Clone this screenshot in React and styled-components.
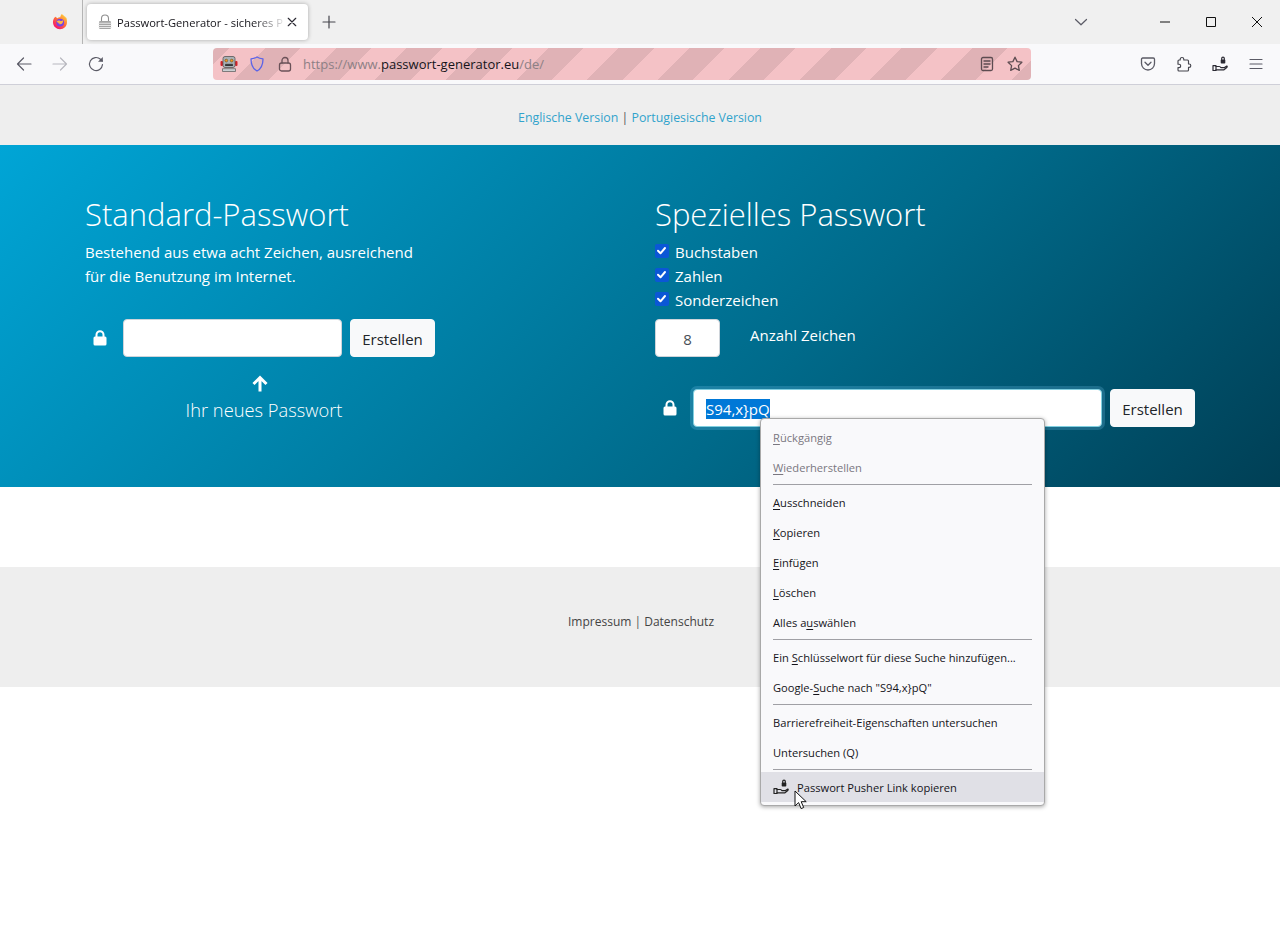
import styled, { createGlobalStyle } from "styled-components";

const uiFont = `"Open Sans", "Noto Sans", "Liberation Sans", sans-serif`;

const GlobalStyle = createGlobalStyle`
  html, body {
    margin: 0;
    padding: 0;
    background: #fff;
    overflow: hidden;
  }
  body {
    font-family: ${uiFont};
  }
  * {
    box-sizing: border-box;
  }
`;

function Icon({ size = 16, box = 16, children, color = "#5b5b66", fill = "none", width = 1.3 }) {
  return (
    <svg
      width={size}
      height={size}
      viewBox={`0 0 ${box} ${box}`}
      fill={fill}
      stroke={color}
      strokeWidth={width}
      strokeLinecap="round"
      strokeLinejoin="round"
    >
      {children}
    </svg>
  );
}

function FirefoxLogo() {
  return (
    <svg width="16" height="16" viewBox="0 0 16 16">
      <defs>
        <linearGradient id="fx" x1="0.8" y1="0.1" x2="0.2" y2="0.9">
          <stop offset="0" stopColor="#ffc63a" />
          <stop offset="0.45" stopColor="#ff7139" />
          <stop offset="1" stopColor="#f5156c" />
        </linearGradient>
      </defs>
      <path
        d="M14.6 4.6c-.4-.9-1.1-1.9-1.7-2.3.4.8.7 1.5.8 2C12.8 2 11.2 1.400 9.900.1 8.800 1.100 8.300 2.400 8.300 3.200 6.900 3.200 6 3.700 5.300 4.300 4.700 3.900 4.400 3.700 4 2.800 3.200 2.700 2.100 3.800 1.800 4.800 1.100 6 .9 7.500 1 8.800 1.300 12.500 4.300 15.200 8 15.200c3.900 0 7-3.100 7-7 0-1.200-.1-2.500-.4-3.600z"
        fill="url(#fx)"
      />
      <circle cx="8.200" cy="8.600" r="3.900" fill="#7542e5" />
      <path
        d="M4.700 7.200c1.300-.8 2.400-.7 3.300-.4.900.3 2.200.4 3-.5.500 1.800-.5 3.600-2.400 3.900-1.200.2-2-.1-2.500-.7.600.1 1.600.1 2.100-.4-1.100.1-2.800-.3-3.500-1.900z"
        fill="#ffb545"
      />
    </svg>
  );
}

function RobotEmoji() {
  return (
    <svg width="18" height="18" viewBox="0 0 18 18">
      <rect x="0.500" y="6" width="2.500" height="5" rx="1" fill="#d2232a" />
      <rect x="15" y="6" width="2.500" height="5" rx="1" fill="#d2232a" />
      <rect x="3" y="1.500" width="12" height="11" rx="2" fill="#aab1b5" stroke="#555" strokeWidth="0.800" />
      <circle cx="6.300" cy="5.600" r="1.400" fill="#f39a1e" stroke="#5a3a12" strokeWidth="0.500" />
      <circle cx="11.700" cy="5.600" r="1.400" fill="#f39a1e" stroke="#5a3a12" strokeWidth="0.500" />
      <path d="M5.500 11V9.300h7V11" fill="#333" stroke="#333" strokeWidth="0.800" />
      <path d="M2.500 16.500v-2.800h13v2.800z" fill="#c9cfd2" stroke="#666" strokeWidth="0.800" />
    </svg>
  );
}

function PusherIcon({ color = "#2b2a33" }) {
  return (
    <Icon color={color} width={1.2}>
      <rect x="8.700" y="3.600" width="4.600" height="4" rx="0.800" fill={color} stroke="none" />
      <path d="M9.700 3.600V2.500a1.300 1.300 0 0 1 2.600 0v1.100" />
      <path d="M1 9.700h3v4.800H1z" />
      <path d="M4 10.500h3.300c.9 0 1.300.4 1.500 1.100h3.700l2.300-1.600c.6.500.5 1.100 0 1.500l-2.800 2.300H4" />
    </Icon>
  );
}

function MouseCursor() {
  return (
    <svg width="14" height="20" viewBox="0 0 14 20">
      <path
        d="M1 1v15l3.600-3.400 2.500 6 2.600-1.100-2.500-5.800h5z"
        fill="#fff"
        stroke="#111"
        strokeWidth="1"
        strokeLinejoin="round"
      />
    </svg>
  );
}

function LockGlyph() {
  return (
    <svg width="16" height="16" viewBox="0 0 16 16">
      <path
        d="M4.500 7V4.800a3.500 3.500 0 0 1 7 0V7"
        fill="none"
        stroke="#fff"
        strokeWidth="2"
      />
      <rect x="1.500" y="6.500" width="13" height="9" rx="1.500" fill="#fff" />
    </svg>
  );
}

function CheckBox() {
  return (
    <Box>
      <svg width="13" height="13" viewBox="0 0 13 13">
        <path
          d="M3 6.800l2.500 2.500L10 4"
          fill="none"
          stroke="#fff"
          strokeWidth="2"
          strokeLinecap="round"
          strokeLinejoin="round"
        />
      </svg>
    </Box>
  );
}

export default function App() {
  return (
    <>
      <GlobalStyle />
      <Window>
        <TabBar>
          <TabStart>
            <FirefoxLogo />
          </TabStart>
          <Tab>
            <Icon color="#8f8f8f" width={1.1}>
              <path d="M4.500 7V4.500a3.500 3.500 0 0 1 7 0V7" />
              <rect x="2" y="7" width="12" height="8" rx="1.200" fill="#a5a5a5" stroke="none" />
              <path d="M2 9.300h12M2 11.500h12M2 13.500h12" stroke="#e6e6e6" />
            </Icon>
            <TabTitle>Passwort-Generator - sicheres P</TabTitle>
            <TabClose>
              <Icon size={10} box={12} color="#2b2a33" width={1.4}>
                <path d="M1.500 1.500l9 9M10.500 1.500l-9 9" />
              </Icon>
            </TabClose>
          </Tab>
          <NewTab>
            <Icon size={14} box={14} color="#45454d" width={1.2}>
              <path d="M7 1v12M1 7h12" />
            </Icon>
          </NewTab>
          <TabSpacer />
          <TabList>
            <Icon size={14} box={14} color="#5b5b66" width={1.2}>
              <path d="M1.500 4.500L7 9.800l5.500-5.300" />
            </Icon>
          </TabList>
          <WindowButton>
            <Icon size={12} box={12} color="#111" width={1}>
              <path d="M1 6h10" strokeLinecap="butt" />
            </Icon>
          </WindowButton>
          <WindowButton>
            <Icon size={12} box={12} color="#111" width={1}>
              <path d="M1.500 1.500h9v9h-9z" strokeLinecap="butt" strokeLinejoin="miter" />
            </Icon>
          </WindowButton>
          <WindowButton>
            <Icon size={12} box={12} color="#111" width={1}>
              <path d="M1 1l10 10M11 1L1 11" strokeLinecap="butt" />
            </Icon>
          </WindowButton>
        </TabBar>

        <NavBar>
          <NavButtons>
            <NavButton>
              <Icon width={1.2}>
                <path d="M15 8H1.500M7.500 2L1.500 8l6 6" />
              </Icon>
            </NavButton>
            <NavButton>
              <Icon color="#b8b8bf" width={1.2}>
                <path d="M1 8h13.500M8.500 2l6 6-6 6" />
              </Icon>
            </NavButton>
            <NavButton>
              <Icon width={1.2}>
                <path d="M14.500 8.500a6.500 6.500 0 1 1-2-5.200L14.300 5" />
                <path d="M14.800 1v4.800H10" fill="#5b5b66" stroke="none" />
              </Icon>
            </NavButton>
          </NavButtons>
          <UrlBar>
            <UrlIcon>
              <RobotEmoji />
            </UrlIcon>
            <UrlIcon>
              <Icon color="#5a63e8" width={1.3}>
                <path d="M8 1c2 1.300 3.800 1.700 6 1.900 0 5.500-1.800 9.800-6 12.100C3.800 12.700 2 8.400 2 2.900 4.200 2.700 6 2.300 8 1z" />
              </Icon>
            </UrlIcon>
            <UrlIcon>
              <Icon color="#6a5158">
                <path d="M5 7V4.500a3 3 0 0 1 6 0V7" />
                <rect x="2.500" y="7" width="11" height="8" rx="2" />
              </Icon>
            </UrlIcon>
            <UrlText>
              <UrlMuted>https://www.</UrlMuted>
              passwort-generator.eu
              <UrlMuted>/de/</UrlMuted>
            </UrlText>
            <UrlIcon>
              <Icon color="#5d4c51">
                <rect x="2.500" y="1.500" width="11" height="13" rx="1.500" />
                <path d="M5 5h6M5 8h6M5 11h4" />
              </Icon>
            </UrlIcon>
            <UrlIcon>
              <Icon color="#5d4c51">
                <path d="M8 1.200l2.100 4.400 4.800.6-3.500 3.400.9 4.800L8 12.100l-4.300 2.300.9-4.800L1.100 6.200l4.800-.6z" />
              </Icon>
            </UrlIcon>
          </UrlBar>
          <Toolbar>
            <NavButton>
              <Icon>
                <path d="M2.700 2h10.600c.7 0 1.200.5 1.200 1.200v4.300a6.500 6.500 0 0 1-13 0V3.200C1.500 2.500 2 2 2.700 2z" />
                <path d="M5 6.300l3 3 3-3" />
              </Icon>
            </NavButton>
            <NavButton>
              <Icon color="#45454d" width={1.15}>
                <path d="M6 1.500c1.200 0 1.800.8 1.800 1.800V4h3.700c.6 0 1 .4 1 1v3h.6a1.700 1.700 0 0 1 0 3.400h-.6v2.600c0 .6-.4 1-1 1H3c-.6 0-1-.4-1-1v-2.400h1a1.700 1.700 0 0 0 0-3.400H2V5c0-.6.400-1 1-1h1.200v-.7C4.200 2.300 4.800 1.500 6 1.500z" />
              </Icon>
            </NavButton>
            <NavButton>
              <PusherIcon />
            </NavButton>
            <NavButton>
              <Icon width={1.2}>
                <path d="M2 3.500h12M2 8h12M2 12.500h12" />
              </Icon>
            </NavButton>
          </Toolbar>
        </NavBar>

        <TopStrip>
          <SoftLink>Englische Version</SoftLink> | <SoftLink>Portugiesische Version</SoftLink>
        </TopStrip>

        <Hero>
          <Column>
            <Heading>Standard-Passwort</Heading>
            <Lead>
              Bestehend aus etwa acht Zeichen, ausreichend
              <br />
              für die Benutzung im Internet.
            </Lead>
            <FieldRow $top={31}>
              <FieldLock>
                <LockGlyph />
              </FieldLock>
              <Field $width={219} />
              <CreateButton>Erstellen</CreateButton>
            </FieldRow>
            <NewPasswordHint>
              <svg width="20" height="18" viewBox="0 0 20 18">
                <path
                  d="M10 16.500V3M3.500 9L10 2.500 16.500 9"
                  fill="none"
                  stroke="#fff"
                  strokeWidth="3"
                />
              </svg>
              <HintText>Ihr neues Passwort</HintText>
            </NewPasswordHint>
          </Column>
          <Column>
            <Heading>Spezielles Passwort</Heading>
            <CheckList>
              <CheckRow>
                <CheckBox /> Buchstaben
              </CheckRow>
              <CheckRow>
                <CheckBox /> Zahlen
              </CheckRow>
              <CheckRow>
                <CheckBox /> Sonderzeichen
              </CheckRow>
            </CheckList>
            <CountRow>
              <CountField>8</CountField>
              <CountLabel>Anzahl Zeichen</CountLabel>
            </CountRow>
            <FieldRow $top={32}>
              <FieldLock>
                <LockGlyph />
              </FieldLock>
              <Field $width={409} $focused>
                <Selected>S94,x}pQ</Selected>
              </Field>
              <CreateButton>Erstellen</CreateButton>
            </FieldRow>
          </Column>
        </Hero>

        <WhiteGap />

        <Footer>
          <FooterLink>Impressum</FooterLink> | <FooterLink>Datenschutz</FooterLink>
        </Footer>

        <Menu>
          <MenuItem $disabled>
            <span>
              <u>R</u>ückgängig
            </span>
          </MenuItem>
          <MenuItem $disabled>
            <span>
              <u>W</u>iederherstellen
            </span>
          </MenuItem>
          <MenuLine />
          <MenuItem>
            <span>
              <u>A</u>usschneiden
            </span>
          </MenuItem>
          <MenuItem>
            <span>
              <u>K</u>opieren
            </span>
          </MenuItem>
          <MenuItem>
            <span>
              <u>E</u>infügen
            </span>
          </MenuItem>
          <MenuItem>
            <span>
              <u>L</u>öschen
            </span>
          </MenuItem>
          <MenuItem>
            <span>
              Alles a<u>u</u>swählen
            </span>
          </MenuItem>
          <MenuLine />
          <MenuItem>
            <span>
              Ein <u>S</u>chlüsselwort für diese Suche hinzufügen...
            </span>
          </MenuItem>
          <MenuItem>
            <span>
              Google-<u>S</u>uche nach "S94,x{"}"}pQ"
            </span>
          </MenuItem>
          <MenuLine />
          <MenuItem>
            <span>Barrierefreiheit-Eigenschaften untersuchen</span>
          </MenuItem>
          <MenuItem>
            <span>Untersuchen (Q)</span>
          </MenuItem>
          <MenuLine />
          <MenuItem $active>
            <PusherIcon color="#222" />
            <span>Passwort Pusher Link kopieren</span>
          </MenuItem>
        </Menu>
        <CursorMark>
          <MouseCursor />
        </CursorMark>
      </Window>
    </>
  );
}

const Window = styled.div`
  position: relative;
  width: 1280px;
  height: 943px;
  overflow: hidden;
  background: #fff;
`;

const TabBar = styled.div`
  display: flex;
  align-items: center;
  height: 44px;
  background: #f0f0f0;
`;

const TabStart = styled.div`
  display: flex;
  align-items: center;
  justify-content: flex-end;
  width: 83px;
  height: 44px;
  padding-right: 14px;
  border-right: 1px solid #b5b5b5;
`;

const Tab = styled.div`
  display: flex;
  align-items: center;
  width: 221px;
  height: 36px;
  margin-left: 4px;
  padding: 0 11px 0 10px;
  border-radius: 4px;
  background: #fff;
  box-shadow: 0 0 4px rgba(0, 0, 0, 0.3);
`;

const TabTitle = styled.div`
  flex: 1;
  margin-left: 4px;
  padding-right: 4px;
  overflow: hidden;
  white-space: nowrap;
  font-size: 11.15px;
  color: #15141a;
  -webkit-mask-image: linear-gradient(to right, #000 80%, transparent 100%);
  mask-image: linear-gradient(to right, #000 80%, transparent 100%);
`;

const TabClose = styled.div`
  display: flex;
`;

const NewTab = styled.div`
  display: flex;
  margin-left: 14px;
`;

const TabSpacer = styled.div`
  flex: 1;
`;

const TabList = styled.div`
  display: flex;
  margin-right: 54px;
`;

const WindowButton = styled.div`
  display: flex;
  justify-content: center;
  width: 46px;
`;

const NavBar = styled.div`
  display: flex;
  align-items: center;
  height: 41px;
  background: #f9f9fb;
  border-bottom: 1px solid #cfcfd8;
`;

const NavButtons = styled.div`
  display: flex;
  width: 213px;
  padding-left: 6px;
`;

const NavButton = styled.div`
  display: flex;
  align-items: center;
  justify-content: center;
  width: 36px;
  height: 32px;
`;

const UrlBar = styled.div`
  display: flex;
  align-items: center;
  width: 818px;
  height: 32px;
  padding: 0 2px;
  border-radius: 4px;
  background: repeating-linear-gradient(
    135deg,
    #e0b2b6 0,
    #e0b2b6 12px,
    #f4c2c6 12px,
    #f4c2c6 37px,
    #e0b2b6 37px,
    #e0b2b6 50px
  );
`;

const UrlIcon = styled.div`
  display: flex;
  align-items: center;
  justify-content: center;
  width: 28px;
  height: 24px;
  flex-shrink: 0;
`;

const UrlText = styled.div`
  flex: 1;
  margin-left: 4px;
  font-size: 13px;
  color: #15141a;
  white-space: nowrap;
`;

const UrlMuted = styled.span`
  color: #8d8085;
`;

const Toolbar = styled.div`
  display: flex;
  margin-left: 99px;
`;

const TopStrip = styled.div`
  height: 60px;
  padding-top: 23px;
  background: #eee;
  text-align: center;
  font-size: 12.35px;
  line-height: 20px;
  color: #555;
`;

const SoftLink = styled.a`
  color: #31a3cc;
`;

const Hero = styled.div`
  display: grid;
  grid-template-columns: 570px 570px;
  height: 342px;
  padding: 46px 0 0 85px;
  background: linear-gradient(135deg, #00a5d6 0%, #006a8a 62%, #003f55 100%);
  color: #fff;
`;

const Column = styled.div`
  display: flex;
  flex-direction: column;
  align-items: flex-start;
`;

const Heading = styled.h2`
  margin: 0 0 3px;
  font-size: 31px;
  font-weight: 300;
  line-height: 46px;
  color: #fff;
`;

const Lead = styled.p`
  margin: 0;
  font-size: 15px;
  line-height: 24px;
`;

const FieldRow = styled.div`
  display: flex;
  align-items: center;
  margin-top: ${(props) => props.$top}px;
`;

const FieldLock = styled.div`
  display: flex;
  justify-content: center;
  width: 30px;
  margin-right: 8px;
`;

const Field = styled.div`
  width: ${(props) => props.$width}px;
  height: 38px;
  padding: 0 12px;
  border: 1px solid ${(props) => (props.$focused ? "#80cfe0" : "#ced4da")};
  border-radius: 4px;
  background: #fff;
  font-size: 15px;
  line-height: 38px;
  color: #495057;
  box-shadow: ${(props) => (props.$focused ? "0 0 0 3px rgba(110, 190, 230, 0.25)" : "none")};
`;

const Selected = styled.span`
  background: #0078d7;
  color: #fff;
`;

const CreateButton = styled.button`
  width: 85px;
  height: 38px;
  margin-left: 8px;
  padding: 1px 0 0;
  border: 1px solid #f8f9fa;
  border-radius: 4px;
  background: #f8f9fa;
  font-family: inherit;
  font-size: 15px;
  color: #212529;
`;

const NewPasswordHint = styled.div`
  display: flex;
  flex-direction: column;
  align-items: center;
  width: 350px;
  margin-top: 18px;
`;

const HintText = styled.div`
  margin-top: 3px;
  padding-left: 8px;
  font-size: 18.3px;
  font-weight: 300;
  line-height: 28px;
`;

const CheckList = styled.div`
  display: flex;
  flex-direction: column;
`;

const CheckRow = styled.label`
  display: flex;
  align-items: center;
  gap: 6px;
  height: 24px;
  font-size: 15px;
`;

const Box = styled.span`
  display: flex;
  width: 14px;
  height: 14px;
  margin-top: -3px;
  border-radius: 2px;
  background: #0b57d6;
`;

const CountRow = styled.div`
  display: flex;
  align-items: center;
  margin-top: 7px;
`;

const CountField = styled.div`
  width: 65px;
  height: 38px;
  border: 1px solid #ced4da;
  border-radius: 4px;
  background: #fff;
  text-align: center;
  font-size: 15px;
  line-height: 38px;
  color: #495057;
`;

const CountLabel = styled.div`
  margin: -6px 0 0 30px;
  font-size: 15px;
`;

const WhiteGap = styled.div`
  height: 80px;
`;

const Footer = styled.div`
  height: 120px;
  padding: 45px 0 0 568px;
  background: #eee;
  font-size: 12px;
  line-height: 20px;
  color: #555;
`;

const FooterLink = styled.a`
  color: #444;
`;

const Menu = styled.div`
  position: absolute;
  top: 418px;
  left: 760px;
  width: 285px;
  height: 388px;
  padding: 4px 0;
  border: 1px solid #a9a9a9;
  border-radius: 4px;
  background: #f9f9fb;
  box-shadow: 0 1px 4px rgba(0, 0, 0, 0.35);
`;

const MenuItem = styled.div`
  display: flex;
  align-items: center;
  gap: 8px;
  height: 30px;
  padding: 0 12px ${(props) => (props.$active ? "0" : "2px")};
  font-size: 11.15px;
  white-space: pre;
  color: ${(props) => (props.$disabled ? "#7a7780" : "#15141a")};
  background: ${(props) => (props.$active ? "#e0e0e6" : "transparent")};
  margin-top: ${(props) => (props.$active ? "-1px" : "0")};

  u {
    text-underline-offset: 2px;
  }
`;

const MenuLine = styled.div`
  height: 1px;
  margin: 1px 12px 3px;
  background: #a0a0a5;
`;

const CursorMark = styled.div`
  position: absolute;
  top: 790px;
  left: 794px;
  display: flex;
`;
